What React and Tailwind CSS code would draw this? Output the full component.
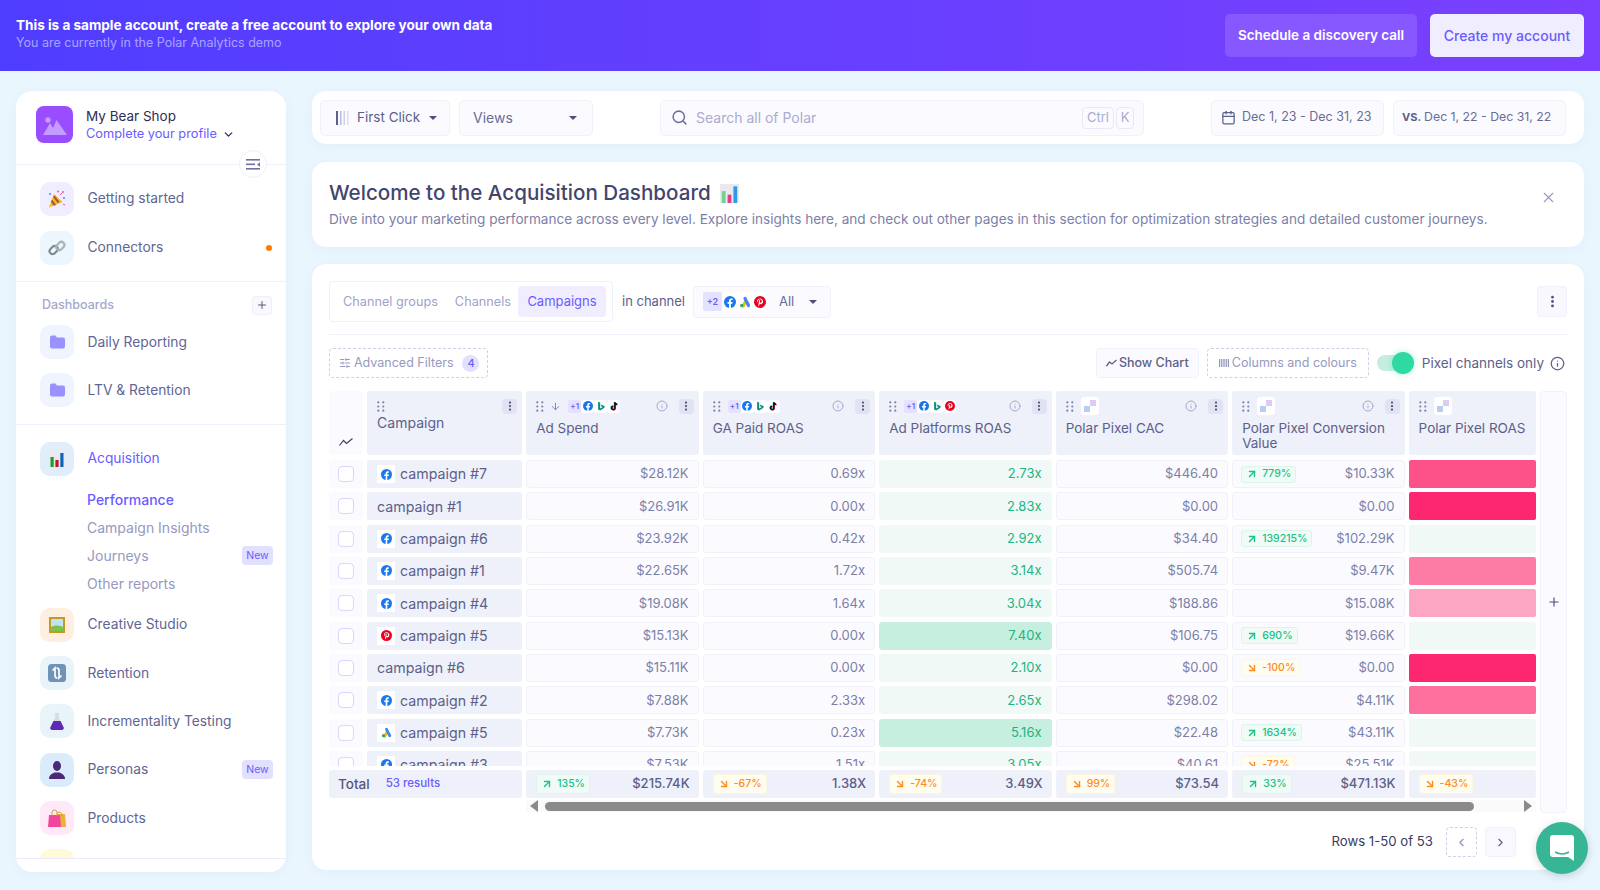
import React from 'react';
import { ArrowDown, ArrowDownRight, ArrowUpRight, Calendar, ChevronDown, ChevronLeft, ChevronRight, EllipsisVertical, Info, Plus, Search, SlidersHorizontal, X } from 'lucide-react';

const cols = 'grid grid-cols-[34px_155px_172.4px_172.4px_172.4px_172.4px_172.4px_127px] gap-x-[4.1px]';

const rows = [
  ['campaign #7', 'fb', '$28.12K', '0.69x', '2.73x', 'l', '$446.40', ['u', '779%'], '$10.33K', 'bg-[#fd5289]'],
  ['campaign #1', null, '$26.91K', '0.00x', '2.83x', 'l', '$0.00', null, '$0.00', 'bg-[#fd2670]'],
  ['campaign #6', 'fb', '$23.92K', '0.42x', '2.92x', 'l', '$34.40', ['u', '139215%'], '$102.29K', 'bg-[#f0f9f5]'],
  ['campaign #1', 'fb', '$22.65K', '1.72x', '3.14x', 'l', '$505.74', null, '$9.47K', 'bg-[#fd7ca6]'],
  ['campaign #4', 'fb', '$19.08K', '1.64x', '3.04x', 'l', '$188.86', null, '$15.08K', 'bg-[#fda6c3]'],
  ['campaign #5', 'pin', '$15.13K', '0.00x', '7.40x', 's', '$106.75', ['u', '690%'], '$19.66K', 'bg-[#f0f9f5]'],
  ['campaign #6', null, '$15.11K', '0.00x', '2.10x', 'l', '$0.00', ['d', '-100%'], '$0.00', 'bg-[#fd2670]'],
  ['campaign #2', 'fb', '$7.88K', '2.33x', '2.65x', 'l', '$298.02', null, '$4.11K', 'bg-[#fd6f9c]'],
  ['campaign #5', 'g', '$7.73K', '0.23x', '5.16x', 's', '$22.48', ['u', '1634%'], '$43.11K', 'bg-[#f0f9f5]'],
  ['campaign #3', 'fb', '$7.53K', '1.51x', '3.05x', 'l', '$40.61', ['d', '-72%'], '$25.51K', 'bg-[#f0f9f5]'],
];

function Fb({ s = 11 }) {
  return (
    <svg width={s} height={s} viewBox="0 0 24 24">
      <circle cx="12" cy="12" r="12" fill="#1877f2" />
      <path d="M16.6 15.4l.6-3.4h-3.4V9.8c0-1 .5-1.8 2-1.8h1.5V5.1s-1.400-.2-2.700-.2c-2.700 0-4.500 1.600-4.500 4.600V12H7v3.400h3.100V24h3.700v-8.600z" fill="#fff" />
    </svg>
  );
}

function Pin({ s = 11 }) {
  return (
    <svg width={s} height={s} viewBox="0 0 24 24">
      <circle cx="12" cy="12" r="12" fill="#e60023" />
      <path d="M12.400 5C8.500 5 6.500 7.600 6.500 10c0 1.400.5 2.700 1.700 3.200.4.100.5-.6.500-.9-.7-1-.8-2-.5-3 .6-1.900 2.300-2.800 4-2.700 2 .1 3.300 1.400 3.300 3.200 0 2-1 3.900-2.500 3.900-.9 0-1.500-.7-1.300-1.600.2-1 .7-2.100.7-2.900 0-1.700-2.400-1.400-2.400.8 0 .7.200 1.200.2 1.200L9 16.300c-.3 1.200-.1 3 0 4 .1.200.3.100.4 0 .5-.8 1.200-2 1.500-3l.5-1.900c.3.500 1.200 1 2.100 1 2.800 0 4.700-2.500 4.700-5.800C17.700 7.400 15.300 5 12.400 5z" fill="#fff" />
    </svg>
  );
}

function GAds({ s = 11 }) {
  return (
    <svg width={s} height={s} viewBox="0 0 24 24" fill="none" strokeLinecap="round" strokeWidth="6.500">
      <path d="M8.500 20L12 13" stroke="#fbbc04" />
      <path d="M12 5l7 14" stroke="#4285f4" />
      <circle cx="5.500" cy="19" r="3.500" fill="#34a853" />
    </svg>
  );
}

function Bing({ s = 11 }) {
  return (
    <svg width={s} height={s} viewBox="0 0 24 24">
      <path d="M5 2l5 1.800v14l6-3.500-3-1.400-1.800-4.500 9.300 3.300v4.700L10 23l-5-2.800z" fill="#0f8f7f" />
    </svg>
  );
}

function Tik({ s = 11 }) {
  return (
    <svg width={s} height={s} viewBox="0 0 24 24" fill="none" strokeWidth="3.600">
      <path d="M14 3v13.500a4 4 0 1 1-4-4M14 3c.5 3 2.500 5 5.500 5" stroke="#25f4ee" transform="translate(-1.200 -.8)" />
      <path d="M14 3v13.500a4 4 0 1 1-4-4M14 3c.5 3 2.500 5 5.500 5" stroke="#fe2c55" transform="translate(1.200 .8)" />
      <path d="M14 3v13.500a4 4 0 1 1-4-4M14 3c.5 3 2.500 5 5.500 5" stroke="#111" />
    </svg>
  );
}

function PolarMark() {
  return (
    <svg width="12" height="12" viewBox="0 0 12 12">
      <rect x="0" y="6" width="6" height="6" fill="#b8cdf0" />
      <rect x="6" y="0" width="6" height="6" fill="#dccdf0" />
    </svg>
  );
}

function IconChip({ children, w = 'w-[13px]' }) {
  return <span className={`flex h-[13px] ${w} items-center justify-center rounded-[3px] bg-white`}>{children}</span>;
}

function PlusOne({ n = '+1' }) {
  return <span className="flex h-[13px] w-[13px] items-center justify-center rounded-[2px] bg-[#e4e2ff] text-[8px] font-semibold text-[#6a5cff]">{n}</span>;
}

function MiniChannels({ last }) {
  return (
    <span className="flex items-center">
      <PlusOne />
      <IconChip><Fb s={10} /></IconChip>
      <IconChip><Bing s={10} /></IconChip>
      <IconChip>{last === 'pin' ? <Pin s={10} /> : <Tik s={10} />}</IconChip>
    </span>
  );
}

function Grip() {
  return (
    <svg width="8" height="11" viewBox="0 0 8 11" fill="#7d80a8" className="shrink-0">
      <circle cx="1.300" cy="1.300" r="1.100" /><circle cx="6.300" cy="1.300" r="1.100" />
      <circle cx="1.300" cy="5.500" r="1.100" /><circle cx="6.300" cy="5.500" r="1.100" />
      <circle cx="1.300" cy="9.700" r="1.100" /><circle cx="6.300" cy="9.700" r="1.100" />
    </svg>
  );
}

function Kebab() {
  return (
    <span className="flex h-[15px] w-[15px] items-center justify-center rounded-[4px] bg-[#e1e3f5]">
      <EllipsisVertical size={12} strokeWidth={2.500} className="text-[#4c4f78]" />
    </span>
  );
}

function HeaderCell({ title, icons, sort, info = true, kebab = true }) {
  return (
    <div className="flex flex-col rounded-[3px] bg-[#eef0fa] pl-[10px] pr-[5px] pt-[7px]">
      <div className="flex h-[16px] items-center">
        <Grip />
        {sort && <ArrowDown size={11} className="ml-[6px] text-[#7d80a8]" />}
        <span className="ml-[7px] flex">{icons}</span>
        {info && <Info size={12} className="ml-auto text-[#a7a9cf]" />}
        {kebab && <span className="ml-[11px]"><Kebab /></span>}
      </div>
      <div className="mt-[7px] text-[13.500px] leading-[15px] text-[#5c5f8a]">{title}</div>
    </div>
  );
}

function Chip({ kind, value, wide }) {
  const up = kind === 'u';
  return (
    <span className={`flex h-[17px] items-center gap-[4px] rounded-[3px] border px-[4px] text-[10.500px] font-medium ${up ? 'border-[#dcf5ea] bg-[#f0fbf6] text-[#1cc088]' : 'border-[#fff6dd] bg-[#fffdf0] text-[#ff8a1f]'} ${wide ? 'h-[20px]' : ''}`}>
      {up ? <ArrowUpRight size={12} strokeWidth={2.800} /> : <ArrowDownRight size={12} strokeWidth={2.800} />}
      {value}
    </span>
  );
}

function Cell({ children, chip, color = 'text-[#7c7fa8]', bg = 'border-[#f1f1fc] bg-[#fbfbff]' }) {
  return (
    <div className={`flex h-[28px] items-center justify-between rounded-[3px] border pl-[8px] pr-[9px] text-[13px] ${bg} ${color}`}>
      <span>{chip}</span>
      <span>{children}</span>
    </div>
  );
}

function RowIcon({ k }) {
  const Comp = { fb: Fb, pin: Pin, g: GAds }[k];
  return (
    <span className="mr-[5px] flex h-[18px] w-[18px] items-center justify-center bg-white">
      <Comp s={11} />
    </span>
  );
}

function Row({ r }) {
  const [name, icon, spend, ga, plat, tone, cac, chip, conv, roas] = r;
  return (
    <div className={`${cols} mb-[4.330px]`}>
      <div className="flex h-[28px] items-center justify-center rounded-[3px] bg-[#fbfbff]">
        <span className="h-[16px] w-[16px] rounded-[4px] border border-[#d9d6fb] bg-white" />
      </div>
      <div className="flex h-[28px] items-center rounded-[3px] bg-[#eef0fa] pl-[10px] text-[14.200px] text-[#5c5f8a]">
        {icon && <RowIcon k={icon} />}
        {name}
      </div>
      <Cell>{spend}</Cell>
      <Cell>{ga}</Cell>
      <Cell color="text-[#1fb484]" bg={tone === 's' ? 'border-[#c6efdf] bg-[#c6efdf]' : 'border-[#f0f9f5] bg-[#f0f9f5]'}>{plat}</Cell>
      <Cell>{cac}</Cell>
      <Cell chip={chip && <Chip kind={chip[0]} value={chip[1]} />}>{conv}</Cell>
      <div className={`h-[28px] rounded-[2px] ${roas}`} />
    </div>
  );
}

function TotalCell({ chip, value }) {
  return (
    <div className="flex h-[28px] items-center justify-between rounded-[3px] bg-[#eef0fa] pl-[10px] pr-[9px] text-[13px] font-medium text-[#5c5f8a]">
      <span className="flex">{chip}</span>
      <span>{value}</span>
    </div>
  );
}

function Tile({ bg, children }) {
  return <div className={`flex h-[34px] w-[34px] shrink-0 items-center justify-center rounded-[10px] ${bg}`}>{children}</div>;
}

function NavItem({ bg, icon, label, active, badge, dot }) {
  return (
    <div className="flex h-[34px] items-center pl-[24px] pr-[13px]">
      <Tile bg={bg}>{icon}</Tile>
      <span className={`ml-[13.500px] text-[13.800px] ${active ? 'text-[#6a5cff]' : 'text-[#626593]'}`}>{label}</span>
      {badge && <NewBadge />}
      {dot && <span className="ml-auto mr-[1px] h-[6px] w-[6px] rounded-full bg-[#ff7a00]" />}
    </div>
  );
}

function NewBadge() {
  return <span className="ml-auto flex h-[19px] w-[31px] items-center justify-center rounded-[4px] bg-[#e2e0ff] text-[10.500px] text-[#6a5cff]">New</span>;
}

function Folder() {
  return (
    <svg width="15" height="14" viewBox="0 0 15 14" fill="#9a90ff">
      <path d="M0 2.500A2 2 0 0 1 2 .5h3.500l1.500 2h6a2 2 0 0 1 2 2V11.500a2 2 0 0 1-2 2H2a2 2 0 0 1-2-2z" />
    </svg>
  );
}

function Party() {
  return (
    <svg width="20" height="20" viewBox="0 0 20 20">
      <path d="M2 18.500L7 5l8.500 8z" fill="#f5b52e" />
      <path d="M5 10.500l4 5.500-2 .8-3-4zM7.500 6.500l5 6.500-1.800 1-4.500-6z" fill="#a0562e" />
      <circle cx="3" cy="5" r="1" fill="#4a8df0" /><circle cx="16" cy="3" r="1" fill="#ef5c9c" />
      <circle cx="17" cy="9" r="1" fill="#4a8df0" /><circle cx="11" cy="2.500" r="1" fill="#ef5c9c" />
      <path d="M16 15l2 1M13 6l2-2" stroke="#d85bb0" strokeWidth="1" />
    </svg>
  );
}

function LinkIco() {
  return (
    <svg width="18" height="18" viewBox="0 0 18 18" fill="none" strokeWidth="2.200">
      <rect x="1.200" y="8" width="9" height="6" rx="3" transform="rotate(-45 5.700 11)" stroke="#7f8a8f" />
      <rect x="7.800" y="4" width="9" height="6" rx="3" transform="rotate(-45 12.300 7)" stroke="#aab3b7" />
    </svg>
  );
}

function Bars({ s = 16, soft }) {
  return (
    <svg width={s} height={s} viewBox="0 0 16 16">
      <rect width="16" height="16" fill="#e9e9ee" />
      <rect x="1.500" y="6" width="3.200" height="10" fill={soft ? '#6fd58a' : '#1f9e2d'} />
      <rect x="6.400" y="9" width="3.200" height="7" fill={soft ? '#e33f86' : '#c01818'} />
      <rect x="11.300" y="2" width="3.200" height="14" fill={soft ? '#2e9bea' : '#0f63bd'} />
    </svg>
  );
}

function Frame() {
  return (
    <svg width="16" height="16" viewBox="0 0 16 16">
      <rect width="16" height="16" fill="#c49a24" />
      <rect x="2" y="2" width="12" height="12" fill="#bfe3f5" />
      <path d="M2 10c3-2 8-2 12 0v4H2z" fill="#7fc24a" />
    </svg>
  );
}

function RetentionIco() {
  return (
    <svg width="18" height="18" viewBox="0 0 18 18" fill="none">
      <rect width="18" height="18" rx="3.500" fill="#6f93b5" />
      <path d="M4.500 6.500L7 4v7.500c0 1.500 1 2.500 2.500 2.500M13.500 11.500L11 14V6.500C11 5 10 4 8.500 4" stroke="#fff" strokeWidth="1.700" />
    </svg>
  );
}

function Flask() {
  return (
    <svg width="14" height="18" viewBox="0 0 14 18">
      <path d="M5 1h4v5l4.500 9a2 2 0 0 1-1.800 3H2.300a2 2 0 0 1-1.800-3L5 6z" fill="#d7dbe8" />
      <path d="M3.500 9h7l3 6a2 2 0 0 1-1.800 3H2.300a2 2 0 0 1-1.800-3z" fill="#5b2bb5" />
    </svg>
  );
}

function Person() {
  return (
    <svg width="16" height="18" viewBox="0 0 16 18" fill="#4a2a78">
      <ellipse cx="8" cy="5" rx="4" ry="5" />
      <path d="M0 18c0-4 3-5.500 5.500-6.500h5C13 12.500 16 14 16 18z" />
    </svg>
  );
}

function Bags() {
  return (
    <svg width="18" height="18" viewBox="0 0 18 18" fill="none">
      <path d="M9 5h8l1 13H9z" fill="#e8b13a" />
      <path d="M1 6h11l1 12H0z" fill="#f0479c" />
      <path d="M4 7V3.500a2.500 2.500 0 0 1 5 0V7M9 4.500a2.500 2.500 0 0 1 4.500 0V7" stroke="#d99a2a" strokeWidth="1" />
    </svg>
  );
}

function Sidebar() {
  return (
    <aside className="relative flex h-[781px] w-[270px] shrink-0 flex-col rounded-[16px] bg-white shadow-[0_2px_10px_rgba(90,150,220,0.08)]">
      <div className="flex h-[73.500px] shrink-0 items-start border-b border-[#f0effc] pl-[20px] pt-[15px]">
        <div className="flex h-[37px] w-[37px] items-center justify-center rounded-[8px] bg-[#9a4dff]">
          <svg width="24" height="20" viewBox="0 0 24 20" fill="#c49bff">
            <circle cx="5" cy="5" r="2.700" />
            <path d="M0 20L7 8l3 5 3.500-8L24 20z" />
          </svg>
        </div>
        <div className="ml-[13px] pt-[1px]">
          <div className="text-[13.500px] leading-[18px] text-[#2d2e52]">My Bear Shop</div>
          <div className="flex items-center text-[12.800px] leading-[18px] text-[#6a5cff]">
            Complete your profile
            <ChevronDown size={13} strokeWidth={2.500} className="ml-[5px] text-[#33345a]" />
          </div>
        </div>
      </div>
      <span className="absolute left-[223px] top-[59px] flex h-[28px] w-[28px] items-center justify-center rounded-full border border-[#f0effc] bg-white">
        <svg width="15" height="11" viewBox="0 0 15 11" fill="#6f7199">
          <rect width="14" height="1.600" /><rect y="4.500" width="9" height="1.600" /><rect y="9" width="14" height="1.600" />
          <path d="M14 3.200v4.600l-3-2.300z" />
        </svg>
      </span>
      <div className="flex-1 overflow-hidden">
        <div className="flex flex-col gap-[15px] pt-[17px]">
          <NavItem bg="bg-[#f0edfe]" icon={<Party />} label="Getting started" />
          <NavItem bg="bg-[#ecf6fe]" icon={<LinkIco />} label="Connectors" dot />
        </div>
        <div className="mt-[16.500px] border-t border-[#f0effc] pt-[13.500px]">
          <div className="flex h-[19px] items-center pl-[26px] pr-[14px]">
            <span className="text-[12.500px] font-medium text-[#a5a8cc]">Dashboards</span>
            <span className="ml-auto flex h-[19px] w-[20px] items-center justify-center rounded-[3px] border border-[#f0f0fb] bg-[#f8f8fe]">
              <Plus size={12} className="text-[#55587f]" />
            </span>
          </div>
          <div className="mt-[10.500px] flex flex-col gap-[14px]">
            <NavItem bg="bg-[#eff4ff]" icon={<Folder />} label="Daily Reporting" />
            <NavItem bg="bg-[#eff4ff]" icon={<Folder />} label="LTV & Retention" />
          </div>
        </div>
        <div className="mt-[17px] border-t border-[#f0effc] pt-[16.500px]">
          <NavItem bg="bg-[#e2edfa]" icon={<Bars />} label="Acquisition" active />
          <div className="mt-[10px] flex flex-col pl-[71px] pr-[13px] text-[14px] text-[#9699c0]">
            <div className="flex h-[28px] items-center font-medium text-[#6a5cff]">Performance</div>
            <div className="flex h-[28px] items-center">Campaign Insights</div>
            <div className="flex h-[28px] items-center">Journeys<NewBadge /></div>
            <div className="flex h-[28px] items-center">Other reports</div>
          </div>
          <div className="mt-[10px] flex flex-col gap-[14.400px]">
            <NavItem bg="bg-[#ffefe0]" icon={<Frame />} label="Creative Studio" />
            <NavItem bg="bg-[#e8f4f9]" icon={<RetentionIco />} label="Retention" />
            <NavItem bg="bg-[#e8f4f9]" icon={<Flask />} label="Incrementality Testing" />
            <NavItem bg="bg-[#daecfc]" icon={<Person />} label="Personas" badge />
            <NavItem bg="bg-[#ffe9f8]" icon={<Bags />} label="Products" />
            <NavItem bg="bg-[#fffad8]" icon={null} label="" />
          </div>
        </div>
      </div>
      <div className="h-[14px] shrink-0 border-t border-[#ecebfb]" />
    </aside>
  );
}

function TopBar() {
  const box = 'flex h-[36px] items-center rounded-[5px] border border-[#f1f1fc] bg-[#fbfbff]';
  return (
    <div className="flex h-[53px] items-center rounded-[14px] bg-white pl-[8px] pr-[18px] shadow-[0_2px_10px_rgba(90,150,220,0.08)]">
      <div className={`${box} w-[130px] pl-[15px] text-[13.500px] text-[#5c5f8a]`}>
        <svg width="15" height="14" viewBox="0 0 15 14" className="mr-[6px]">
          <rect width="2" height="14" fill="#5c5f8a" />
          <rect x="4" width="1.500" height="14" fill="#b9bbd8" />
          <rect x="7.500" width="1.500" height="14" fill="#cfd0e6" />
          <rect x="11" width="1.500" height="14" fill="#dcdded" />
        </svg>
        First Click
        <span className="ml-[9px] h-0 w-0 border-x-[4px] border-t-[4px] border-x-transparent border-t-[#4c4f78]" />
      </div>
      <div className={`${box} ml-[9px] w-[134px] pl-[13px] pr-[15px] text-[14px] text-[#6a6d96]`}>
        Views
        <span className="ml-auto h-0 w-0 border-x-[4px] border-t-[4px] border-x-transparent border-t-[#4c4f78]" />
      </div>
      <div className={`${box} ml-[67px] h-[35px] w-[484px] pl-[10px] pr-[7px] text-[14px] text-[#a9abcf]`}>
        <Search size={17} strokeWidth={2.200} className="mr-[8px] text-[#6f7199]" />
        Search all of Polar
        <span className="ml-auto flex h-[22px] w-[32px] items-center justify-center rounded-[4px] border border-[#e8e8f8] text-[13px] text-[#a9abcf]">Ctrl</span>
        <span className="ml-[2px] mr-[2px] flex h-[22px] w-[18px] items-center justify-center rounded-[4px] border border-[#e8e8f8] text-[13px] text-[#a9abcf]">K</span>
      </div>
      <div className={`${box} ml-auto w-[173px] pl-[9px] text-[12.500px] text-[#6a6d96]`}>
        <Calendar size={15} className="mr-[6px] text-[#5c5f8a]" />
        Dec 1, 23 - Dec 31, 23
      </div>
      <div className={`${box} ml-[9px] w-[173px] pl-[8px] text-[12.300px] text-[#6a6d96]`}>
        <b className="mr-[3px] text-[11px] font-bold text-[#5c5f8a]">VS.</b>
        Dec 1, 22 - Dec 31, 22
      </div>
    </div>
  );
}

function Welcome() {
  return (
    <div className="relative mt-[18px] h-[85px] rounded-[14px] bg-white pl-[17px] pt-[17px] shadow-[0_2px_10px_rgba(90,150,220,0.08)]">
      <div className="flex items-center text-[20.600px] font-medium leading-[28px] text-[#43456d]">
        Welcome to the Acquisition Dashboard
        <span className="ml-[9px]"><Bars s={19} soft /></span>
      </div>
      <div className="mt-[3px] text-[13.600px] leading-[18px] text-[#7c7fa8]">
        Dive into your marketing performance across every level. Explore insights here, and check out other pages in this section for optimization strategies and detailed customer journeys.
      </div>
      <X size={17} strokeWidth={1.500} className="absolute right-[27px] top-[27px] text-[#9699c0]" />
    </div>
  );
}

function Controls() {
  return (
    <>
      <div className="flex h-[41px] items-center">
        <div className="flex h-[41px] w-[284px] items-center whitespace-nowrap rounded-[4px] border border-[#f0f0fb] px-[6px] text-[12.700px] text-[#a0a3c6]">
          <span className="ml-[7px]">Channel groups</span>
          <span className="ml-[17px]">Channels</span>
          <span className="ml-auto flex h-[31px] w-[88px] items-center justify-center rounded-[4px] bg-[#f0eefe] text-[13px] text-[#6a5cff]">Campaigns</span>
        </div>
        <span className="ml-[9px] text-[13px] text-[#5c5f8a]">in channel</span>
        <div className="ml-[8px] flex h-[32px] w-[138px] items-center rounded-[4px] border border-[#f1f1fc] bg-[#fbfbff] pl-[9px] pr-[13px]">
          <span className="flex h-[19px] w-[19px] items-center justify-center rounded-[2px] bg-[#e4e2ff] text-[9px] font-semibold text-[#6a5cff]">+2</span>
          <span className="flex h-[19px] w-[15px] items-center justify-center bg-white"><Fb s={12} /></span>
          <span className="flex h-[19px] w-[15px] items-center justify-center bg-white"><GAds s={12} /></span>
          <span className="flex h-[19px] w-[15px] items-center justify-center bg-white"><Pin s={12} /></span>
          <span className="ml-[12px] text-[13px] text-[#6a6d96]">All</span>
          <span className="ml-auto h-0 w-0 border-x-[4px] border-t-[4px] border-x-transparent border-t-[#4c4f78]" />
        </div>
        <span className="ml-auto flex h-[31px] w-[30px] items-center justify-center rounded-[4px] border border-[#f1f1fc] bg-[#f8f8fe]">
          <EllipsisVertical size={15} strokeWidth={2.500} className="text-[#4c4f78]" />
        </span>
      </div>
      <div className="mt-[12px] border-t border-[#f0f0fb]" />
      <div className="mt-[13px] flex h-[30px] items-center">
        <div className="flex h-[30px] w-[159px] items-center rounded-[4px] border border-dashed border-[#cfd0e6] pl-[9px] text-[12.500px] text-[#9699c0]">
          <SlidersHorizontal size={12} className="mr-[3px] text-[#9699c0]" />
          Advanced Filters
          <span className="ml-[9px] flex h-[17px] w-[17px] items-center justify-center rounded-full bg-[#e2e0ff] text-[11px] font-medium text-[#6a5cff]">4</span>
        </div>
        <div className="ml-auto flex h-[30px] w-[103px] items-center justify-center rounded-[4px] border border-[#f1f1fc] bg-[#fbfbff] text-[12.500px] font-medium text-[#5c5f8a]">
          <svg width="11" height="8" viewBox="0 0 11 8" fill="none" className="mr-[2px]" stroke="#5c5f8a" strokeWidth="1.300"><path d="M.5 7l3-4 2.500 2L10.500 1" /></svg>
          Show Chart
        </div>
        <div className="ml-[8px] flex h-[30px] w-[162px] items-center justify-center rounded-[4px] border border-dashed border-[#cfd0e6] text-[12.500px] text-[#9699c0]">
          <svg width="10" height="8" viewBox="0 0 10 8" className="mr-[3px]" fill="#8f92b8"><rect width="1.200" height="8" /><rect x="2.200" width="1.200" height="8" /><rect x="4.400" width="1.200" height="8" /><rect x="6.600" width="1.200" height="8" /><rect x="8.800" width="1.200" height="8" /></svg>
          Columns and colours
        </div>
        <span className="relative ml-[8px] h-[16px] w-[34px] rounded-full bg-[#c5eee0]">
          <span className="absolute right-[-3px] top-[-3px] h-[22px] w-[22px] rounded-full bg-[#2ed9a3] shadow-[0_0_6px_rgba(46,217,163,0.4)]" />
        </span>
        <span className="ml-[11px] text-[13.500px] text-[#5c5f8a]">Pixel channels only</span>
        <Info size={15} className="ml-[6px] mr-[2px] text-[#5c5f8a]" />
      </div>
    </>
  );
}

function DataTable() {
  return (
    <div className="mt-[13px] flex">
      <div className="w-[1207px] shrink-0">
        <div className={`${cols} h-[64px]`}>
          <div className="flex items-end justify-center rounded-[3px] bg-[#fbfbff] pb-[9px]">
            <svg width="14" height="8" viewBox="0 0 14 8" fill="none" stroke="#3f4168" strokeWidth="1.200"><path d="M.5 7.500l4-5 3 3 6-5" /></svg>
          </div>
          <div className="flex flex-col rounded-[3px] bg-[#eef0fa] pl-[10px] pr-[5px] pt-[7px]">
            <div className="flex h-[16px] items-center justify-between"><Grip /><Kebab /></div>
            <div className="-mt-[2px] text-[14px] text-[#5c5f8a]">Campaign</div>
          </div>
          <HeaderCell title="Ad Spend" sort icons={<MiniChannels />} />
          <HeaderCell title="GA Paid ROAS" icons={<MiniChannels />} />
          <HeaderCell title="Ad Platforms ROAS" icons={<MiniChannels last="pin" />} />
          <HeaderCell title="Polar Pixel CAC" icons={<IconChip w="w-[18px] !h-[18px]"><PolarMark /></IconChip>} />
          <HeaderCell title="Polar Pixel Conversion Value" icons={<IconChip w="w-[18px] !h-[18px]"><PolarMark /></IconChip>} />
          <HeaderCell title="Polar Pixel ROAS" info={false} kebab={false} icons={<IconChip w="w-[18px] !h-[18px]"><PolarMark /></IconChip>} />
        </div>
        <div className="mt-[5px] h-[306px] overflow-hidden">
          {rows.map((r, i) => <Row key={i} r={r} />)}
        </div>
        <div className={`${cols} mt-[4px]`}>
          <div className="col-span-2 flex h-[28px] items-center rounded-[3px] bg-[#eef0fa] pl-[9px] text-[13.500px] font-medium text-[#54577f]">
            Total
            <span className="ml-[16px] text-[11.500px] font-medium text-[#6a5cff]">53 results</span>
          </div>
          <TotalCell chip={<Chip kind="u" value="135%" wide />} value="$215.74K" />
          <TotalCell chip={<Chip kind="d" value="-67%" wide />} value="1.38X" />
          <TotalCell chip={<Chip kind="d" value="-74%" wide />} value="3.49X" />
          <TotalCell chip={<Chip kind="d" value="99%" wide />} value="$73.54" />
          <TotalCell chip={<Chip kind="u" value="33%" wide />} value="$471.13K" />
          <TotalCell chip={<Chip kind="d" value="-43%" wide />} />
        </div>
        <div className="ml-[197px] mt-[2px] flex h-[12px] items-center bg-[#fafafa] px-[4px]">
          <span className="h-0 w-0 border-y-[6px] border-r-[8px] border-y-transparent border-r-[#8a8a8a]" />
          <span className="ml-[7px] mr-[50px] h-[9px] flex-1 rounded-full bg-[#8a8a8a]" />
          <span className="ml-auto h-0 w-0 border-y-[6px] border-l-[8px] border-y-transparent border-l-[#8a8a8a]" />
        </div>
      </div>
      <div className="ml-[4px] flex h-[422px] w-[27px] items-center justify-center rounded-[4px] border border-[#f1f1fc] bg-[#fbfbff]">
        <Plus size={14} className="text-[#4c4f78]" />
      </div>
    </div>
  );
}

function Pager() {
  return (
    <div className="mt-[14px] flex items-center justify-end pr-[51px]">
      <span className="text-[13.200px] text-[#3a3c62]">Rows 1-50 of 53</span>
      <span className="ml-[13px] flex h-[30px] w-[31px] items-center justify-center rounded-[4px] border border-dashed border-[#cfd0e6]">
        <ChevronLeft size={13} className="text-[#8f92b8]" />
      </span>
      <span className="ml-[8px] flex h-[30px] w-[31px] items-center justify-center rounded-[4px] border border-[#f1f1fc] bg-[#f8f8fe]">
        <ChevronRight size={13} className="text-[#5c5f8a]" />
      </span>
    </div>
  );
}

export default function App() {
  return (
    <div className="relative h-[890px] w-[1600px] overflow-hidden bg-[#eaf6fe] font-['Inter',sans-serif]">
      <header className="flex h-[71px] items-center bg-gradient-to-r from-[#4f3dff] to-[#7b3ffe] pl-[16px] pr-[16px]">
        <div className="pb-[4px]">
          <div className="text-[13.550px] font-bold leading-[18px] text-white">This is a sample account, create a free account to explore your own data</div>
          <div className="text-[12.500px] leading-[17px] text-[#a9a3ff]">You are currently in the Polar Analytics demo</div>
        </div>
        <button className="ml-auto h-[43px] w-[192px] rounded-[5px] bg-[#8758ff] text-[13.500px] font-semibold text-white">Schedule a discovery call</button>
        <button className="ml-[13px] h-[43px] w-[154px] rounded-[5px] bg-[#f0edfe] text-[14px] font-medium text-[#6a5cff]">Create my account</button>
      </header>
      <div className="flex gap-[26px] pl-[16px] pr-[16px] pt-[20px]">
        <Sidebar />
        <main className="min-w-0 flex-1">
          <TopBar />
          <Welcome />
          <section className="mt-[17px] h-[606px] rounded-[14px] bg-white pl-[17px] pr-[17px] pt-[17px] shadow-[0_2px_10px_rgba(90,150,220,0.08)]">
            <Controls />
            <DataTable />
            <Pager />
          </section>
        </main>
      </div>
      <div className="absolute left-[1536px] top-[822px] flex h-[52px] w-[52px] items-center justify-center rounded-full bg-[#36b694] shadow-[0_2px_8px_rgba(0,0,0,0.15)]">
        <svg width="24" height="26" viewBox="0 0 24 26" fill="#fff">
          <path d="M3 0h18a3 3 0 0 1 3 3v23l-6-4H3a3 3 0 0 1-3-3V3a3 3 0 0 1 3-3z" />
          <path d="M5 17c4 2.500 10 2.500 14 0" fill="none" stroke="#36b694" strokeWidth="1.500" />
        </svg>
      </div>
    </div>
  );
}
